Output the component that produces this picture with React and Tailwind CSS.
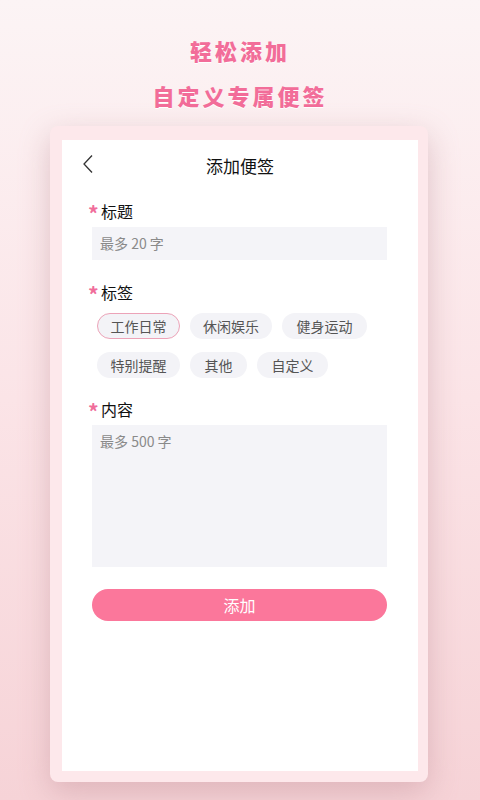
import React from 'react';

const font = { fontFamily: '"Noto Sans CJK SC", "Noto Sans", sans-serif' };

const Label = ({ text }) => (
  <div className="flex items-center h-[22px]">
    <span className="text-[#f06d9b] text-[21px] font-bold leading-none w-[13px] mt-[4px]">*</span>
    <span className="text-[16px] text-[#111] leading-[22px]">{text}</span>
  </div>
);

const Chip = ({ text, active, width }) => (
  <div
    className={`h-[26px] rounded-full bg-[#f3f3f7] flex items-center justify-center text-[14px] text-[#555] ${
      active ? 'border border-[#eca3b8]' : ''
    } ${width}`}
  >
    {text}
  </div>
);

const App = () => {
  return (
    <div
      style={font}
      className="w-[480px] h-[800px] overflow-hidden flex flex-col items-center bg-gradient-to-b from-[#fcf4f5] via-[#fbe4e7] to-[#f6d3d7]"
    >
      {/* Heading */}
      <div className="pt-[28px] flex flex-col items-center text-[#f26d99] font-black text-[22px] leading-[45px] tracking-[3px] [text-shadow:0_1px_0_#fff]">
        <div>轻松添加</div>
        <div>自定义专属便签</div>
      </div>

      {/* Phone frame */}
      <div className="self-start ml-[50px] mt-[8px] w-[378px] h-[656px] rounded-[8px] bg-[#fde8eb] pt-[14px] pl-[12px] pr-[10px] pb-[11px] shadow-[0_10px_30px_rgba(190,140,148,0.45)]">
        <div className="w-[356px] h-[631px] bg-white flex flex-col">
          {/* Header */}
          <div className="h-[52px] relative flex items-center justify-center">
            <svg
              className="absolute left-[19px] top-[14px]"
              width="14"
              height="20"
              viewBox="0 0 14 20"
              fill="none"
              stroke="#333"
              strokeWidth="1.3"
            >
              <path d="M11 1.5 L3 10 L11 18.5" />
            </svg>
            <span className="text-[17px] text-[#111]">添加便签</span>
          </div>

          <div className="pl-[30px] pr-[31px] flex flex-col">
            <div className="mt-[8px] -ml-[4px]">
              <Label text="标题" />
            </div>
            <div className="mt-[5px] h-[33px] bg-[#f4f4f8] flex items-center px-[8px] text-[14px] text-[#8a8a8a]">
              最多 20 字
            </div>

            <div className="mt-[21px] -ml-[4px]">
              <Label text="标签" />
            </div>
            <div className="mt-[10px] pl-[5px] flex flex-col gap-[13px]">
              <div className="flex gap-[10px]">
                <Chip text="工作日常" active width="w-[83px]" />
                <Chip text="休闲娱乐" width="w-[82px]" />
                <Chip text="健身运动" width="w-[85px]" />
              </div>
              <div className="flex gap-[10px]">
                <Chip text="特别提醒" width="w-[83px]" />
                <Chip text="其他" width="w-[57px]" />
                <Chip text="自定义" width="w-[71px]" />
              </div>
            </div>

            <div className="mt-[20px] -ml-[4px]">
              <Label text="内容" />
            </div>
            <div className="mt-[5px] h-[142px] bg-[#f4f4f8] px-[8px] pt-[6px] text-[14px] text-[#8a8a8a]">
              最多 500 字
            </div>

            <button className="mt-[22px] h-[32px] rounded-[16px] bg-[#fb779b] text-white text-[16px] flex items-center justify-center">
              添加
            </button>
          </div>
        </div>
      </div>
    </div>
  );
};

export default App;
